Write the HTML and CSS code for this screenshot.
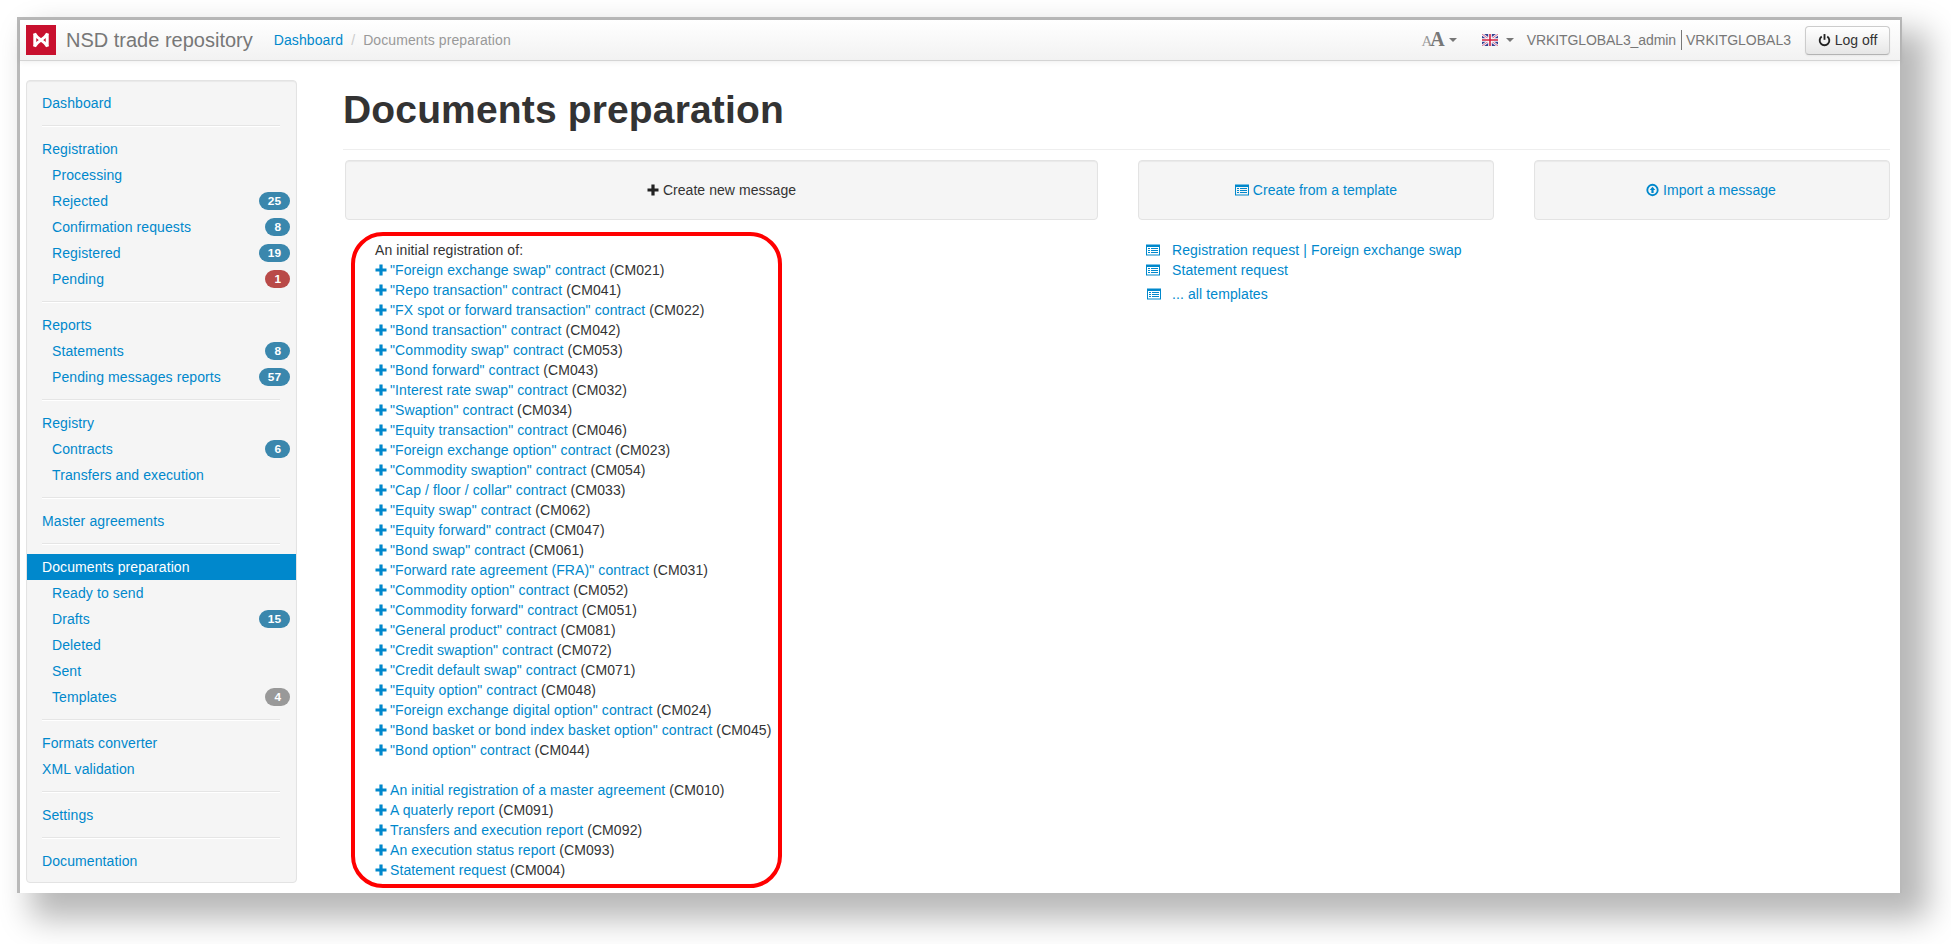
FILE: index.html
```html
<!DOCTYPE html>
<html lang="en">
<head>
<meta charset="utf-8">
<title>Documents preparation</title>
<link rel="stylesheet" href="styles.css">
</head>
<body>
<svg class="sprites" width="0" height="0" aria-hidden="true">
  <symbol id="plus" viewBox="0 0 12 12"><path d="M4.4 0.5h3.2v3.9h3.9v3.2H7.6v3.9H4.4V7.6H.5V4.4h3.9z" fill="currentColor"/></symbol>
  <symbol id="list" viewBox="0 0 14 12"><path fill-rule="evenodd" d="M0 0.5h14v11H0zM1 3v7.5h12V3z" fill="currentColor"/><path d="M2 4h2v1H2zM5 4h7v1H5zM2 6h2v1H2zM5 6h7v1H5zM2 8h2v1H2zM5 8h7v1H5z" fill="currentColor"/></symbol>
</svg>
<div class="frame">
  <header class="topbar">
    <div class="logo">
      <svg viewBox="0 0 30 30" width="30" height="30"><path d="M8.8 8.5v13M21.2 8.5v13" fill="none" stroke="#fff" stroke-width="3"/><path d="M8.5 8.5C12 15 18 15 21.5 21.5M21.5 8.5C18 15 12 15 8.5 21.5" fill="none" stroke="#fff" stroke-width="2.8"/></svg>
    </div>
    <a class="brand">NSD trade repository</a>
    <nav class="crumbs"><a>Dashboard</a><span class="sep">/</span><span class="current">Documents preparation</span></nav>
    <div class="tools">
      <span class="fontsize"><span class="a-small">A</span><span class="a-big">A</span><i class="caret"></i></span>
      <span class="lang">
        <svg viewBox="0 0 16 12" width="16" height="12"><rect width="16" height="12" fill="#34408f"/><path d="M0 0l16 12M16 0L0 12" stroke="#eef" stroke-width="2.6"/><path d="M0 0l16 12M16 0L0 12" stroke="#d8506a" stroke-width=".8"/><path d="M8 0v12M0 6h16" stroke="#fff" stroke-width="3.6"/><path d="M8 0v12M0 6h16" stroke="#d02040" stroke-width="1.6"/></svg>
        <i class="caret"></i>
      </span>
      <span class="user"><span class="user-name">VRKITGLOBAL3_admin</span><span class="user-org">VRKITGLOBAL3</span></span>
      <button class="logoff" type="button">
        <svg viewBox="0 0 14 14" width="13" height="14"><path d="M4 3.2a5.2 5.2 0 1 0 6 0" fill="none" stroke="#222" stroke-width="2"/><path d="M7 .6v6.2" stroke="#222" stroke-width="2"/></svg>
        Log off
      </button>
    </div>
  </header>
  <div class="body">
    <aside class="sidebar">
      <ul class="nav">
        <li><a>Dashboard</a></li>
        <li class="divider"></li>
        <li><a>Registration</a></li>
        <li class="sub"><a>Processing</a></li>
        <li class="sub"><a>Rejected</a><span class="badge">25</span></li>
        <li class="sub"><a>Confirmation requests</a><span class="badge">8</span></li>
        <li class="sub"><a>Registered</a><span class="badge">19</span></li>
        <li class="sub"><a>Pending</a><span class="badge badge-red">1</span></li>
        <li class="divider"></li>
        <li><a>Reports</a></li>
        <li class="sub"><a>Statements</a><span class="badge">8</span></li>
        <li class="sub"><a>Pending messages reports</a><span class="badge">57</span></li>
        <li class="divider"></li>
        <li><a>Registry</a></li>
        <li class="sub"><a>Contracts</a><span class="badge">6</span></li>
        <li class="sub"><a>Transfers and execution</a></li>
        <li class="divider"></li>
        <li><a>Master agreements</a></li>
        <li class="divider"></li>
        <li class="active"><a>Documents preparation</a></li>
        <li class="sub"><a>Ready to send</a></li>
        <li class="sub"><a>Drafts</a><span class="badge">15</span></li>
        <li class="sub"><a>Deleted</a></li>
        <li class="sub"><a>Sent</a></li>
        <li class="sub"><a>Templates</a><span class="badge badge-gray">4</span></li>
        <li class="divider"></li>
        <li><a>Formats converter</a></li>
        <li><a>XML validation</a></li>
        <li class="divider"></li>
        <li><a>Settings</a></li>
        <li class="divider"></li>
        <li><a>Documentation</a></li>
      </ul>
    </aside>
    <main class="content">
      <h1 class="page-title">Documents preparation</h1>
      <div class="columns">
        <div class="panel panel-dark"><svg class="ico-plus"><use href="#plus"/></svg> Create new message</div>
        <a class="panel"><svg class="ico-list"><use href="#list"/></svg> Create from a template</a>
        <a class="panel panel-import">
          <svg viewBox="0 0 14 14" width="13" height="14"><circle cx="7" cy="7" r="5.6" fill="none" stroke="currentColor" stroke-width="2"/><path d="M7 3.6L10 7H8.2v3.2H5.8V7H4z" fill="currentColor"/></svg>
          Import a message</a>
        <div class="msg-list">
          <div>An initial registration of:</div>
          <div><svg class="ico-plus"><use href="#plus"/></svg><a>"Foreign exchange swap" contract</a> (CM021)</div>
          <div><svg class="ico-plus"><use href="#plus"/></svg><a>"Repo transaction" contract</a> (CM041)</div>
          <div><svg class="ico-plus"><use href="#plus"/></svg><a>"FX spot or forward transaction" contract</a> (CM022)</div>
          <div><svg class="ico-plus"><use href="#plus"/></svg><a>"Bond transaction" contract</a> (CM042)</div>
          <div><svg class="ico-plus"><use href="#plus"/></svg><a>"Commodity swap" contract</a> (CM053)</div>
          <div><svg class="ico-plus"><use href="#plus"/></svg><a>"Bond forward" contract</a> (CM043)</div>
          <div><svg class="ico-plus"><use href="#plus"/></svg><a>"Interest rate swap" contract</a> (CM032)</div>
          <div><svg class="ico-plus"><use href="#plus"/></svg><a>"Swaption" contract</a> (CM034)</div>
          <div><svg class="ico-plus"><use href="#plus"/></svg><a>"Equity transaction" contract</a> (CM046)</div>
          <div><svg class="ico-plus"><use href="#plus"/></svg><a>"Foreign exchange option" contract</a> (CM023)</div>
          <div><svg class="ico-plus"><use href="#plus"/></svg><a>"Commodity swaption" contract</a> (CM054)</div>
          <div><svg class="ico-plus"><use href="#plus"/></svg><a>"Cap / floor / collar" contract</a> (CM033)</div>
          <div><svg class="ico-plus"><use href="#plus"/></svg><a>"Equity swap" contract</a> (CM062)</div>
          <div><svg class="ico-plus"><use href="#plus"/></svg><a>"Equity forward" contract</a> (CM047)</div>
          <div><svg class="ico-plus"><use href="#plus"/></svg><a>"Bond swap" contract</a> (CM061)</div>
          <div><svg class="ico-plus"><use href="#plus"/></svg><a>"Forward rate agreement (FRA)" contract</a> (CM031)</div>
          <div><svg class="ico-plus"><use href="#plus"/></svg><a>"Commodity option" contract</a> (CM052)</div>
          <div><svg class="ico-plus"><use href="#plus"/></svg><a>"Commodity forward" contract</a> (CM051)</div>
          <div><svg class="ico-plus"><use href="#plus"/></svg><a>"General product" contract</a> (CM081)</div>
          <div><svg class="ico-plus"><use href="#plus"/></svg><a>"Credit swaption" contract</a> (CM072)</div>
          <div><svg class="ico-plus"><use href="#plus"/></svg><a>"Credit default swap" contract</a> (CM071)</div>
          <div><svg class="ico-plus"><use href="#plus"/></svg><a>"Equity option" contract</a> (CM048)</div>
          <div><svg class="ico-plus"><use href="#plus"/></svg><a>"Foreign exchange digital option" contract</a> (CM024)</div>
          <div><svg class="ico-plus"><use href="#plus"/></svg><a>"Bond basket or bond index basket option" contract</a> (CM045)</div>
          <div class="group-end"><svg class="ico-plus"><use href="#plus"/></svg><a>"Bond option" contract</a> (CM044)</div>
          <div><svg class="ico-plus"><use href="#plus"/></svg><a>An initial registration of a master agreement</a> (CM010)</div>
          <div><svg class="ico-plus"><use href="#plus"/></svg><a>A quaterly report</a> (CM091)</div>
          <div><svg class="ico-plus"><use href="#plus"/></svg><a>Transfers and execution report</a> (CM092)</div>
          <div><svg class="ico-plus"><use href="#plus"/></svg><a>An execution status report</a> (CM093)</div>
          <div><svg class="ico-plus"><use href="#plus"/></svg><a>Statement request</a> (CM004)</div>
        </div>
        <div class="tpl-list">
          <a class="tpl"><svg class="ico-list"><use href="#list"/></svg>Registration request | Foreign exchange swap</a>
          <a class="tpl"><svg class="ico-list"><use href="#list"/></svg>Statement request</a>
          <a class="tpl tpl-all"><svg class="ico-list"><use href="#list"/></svg>... all templates</a>
        </div>
      </div>
    </main>
  </div>
</div>
</body>
</html>
```
FILE: styles.css
```css
* { box-sizing: border-box; }
html, body { margin: 0; padding: 0; height: 100%; overflow: hidden; background: #fff; }
body { font-family: "Liberation Sans", Arial, sans-serif; font-size: 14px; line-height: 20px; color: #333; }
a { color: #08c; text-decoration: none; }
.sprites { position: absolute; }

.frame {
  width: 1885px;
  height: 876px;
  margin: 17px 0 0 17px;
  background: #fff;
  border-style: solid;
  border-color: #b9b9b9;
  border-width: 3px 2px 0 3px;
  box-shadow: 20px 20px 30px 6px #b8b8b8;
}

.topbar {
  height: 41px;
  display: flex;
  align-items: center;
  padding: 0 10px 0 6px;
  background: linear-gradient(#fff, #f2f2f2);
  border-bottom: 1px solid #d4d4d4;
  box-shadow: 0 1px 6px rgba(0,0,0,.07);
}
.logo { width: 30px; height: 30px; background: #c8102e; flex: none; }
.logo svg { display: block; }
.brand { margin-left: 10px; font-size: 20px; color: #777; }
.crumbs { margin-left: 21px; letter-spacing: .1px; }
.crumbs .sep { color: #ccc; padding: 0 8px; }
.crumbs .current { color: #999; }

.tools { margin-left: auto; display: flex; align-items: center; color: #777; }
.fontsize { display: flex; align-items: baseline; font-family: "Liberation Serif", serif; color: #777; }
.a-small { font-size: 15px; margin-right: -2px; color: #999; }
.a-big { font-size: 20px; font-weight: bold; color: #777; }
.caret { display: inline-block; width: 0; height: 0; border: 4px solid transparent; border-top-color: #777; border-bottom-width: 0; vertical-align: middle; }
.fontsize .caret { margin-left: 4px; align-self: center; }
.lang { display: flex; align-items: center; margin-left: 25px; }
.lang .caret { margin-left: 8px; }
.user { margin-left: 13px; display: flex; align-items: center; }
.user-name { padding-right: 5px; border-right: 1px solid #777; letter-spacing: -.1px; }
.user-org { padding-left: 4px; }
.logoff {
  margin-left: 14px;
  width: 85px;
  height: 29px;
  padding: 0;
  display: flex;
  align-items: center;
  justify-content: center;
  gap: 4px;
  font: 14px/20px "Liberation Sans", Arial, sans-serif;
  color: #333;
  background: linear-gradient(#fff, #e6e6e6);
  border: 1px solid #ccc;
  border-bottom-color: #b3b3b3;
  border-radius: 4px;
  box-shadow: inset 0 1px 0 rgba(255,255,255,.2), 0 1px 2px rgba(0,0,0,.05);
}

.body { display: flex; align-items: flex-start; padding-left: 6px; }
.sidebar {
  width: 271px;
  height: 803px;
  margin-top: 19px;
  flex: none;
  padding: 9px 0 8px;
  background: #f5f5f5;
  border: 1px solid #e3e3e3;
  border-radius: 4px;
  box-shadow: inset 0 1px 1px rgba(0,0,0,.05);
}
.nav { list-style: none; margin: 0; padding: 0; }
.nav li { display: flex; align-items: center; justify-content: space-between; height: 26px; padding: 0 6px 0 15px; }
.nav li a { letter-spacing: .1px; }
.nav li.sub { padding-left: 25px; }
.nav li.divider { display: block; height: 2px; margin: 9px 16px 9px 15px; padding: 0; background: #e5e5e5; border-bottom: 1px solid #fff; }
.nav li.active { background: #08c; }
.nav li.active a { color: #fff; }
.badge { height: 18px; padding: 0 9px; border-radius: 9px; background: #3a87ad; color: #fff; font-size: 11.844px; font-weight: bold; line-height: 18px; }
.badge-red { background: #b94a48; }
.badge-gray { background: #999; }

.content { flex: 1; min-width: 0; margin-left: 46px; padding-right: 10px; }
.page-title { margin: 0; height: 89px; padding-top: 29px; font-size: 39px; letter-spacing: .15px; line-height: 40px; font-weight: bold; color: #333; border-bottom: 1px solid #eee; }
.columns { display: grid; grid-template-columns: 753px 356px 1fr; column-gap: 40px; margin: 10px 0 0 2px; align-items: start; }
.panel { height: 60px; display: flex; align-items: center; justify-content: center; gap: 4px; letter-spacing: .05px; background: #f5f5f5; border: 1px solid #e3e3e3; border-radius: 4px; box-shadow: inset 0 1px 1px rgba(0,0,0,.05); }
.panel-import { padding-right: 2px; }
.panel-dark { color: #333; }
.ico-plus { width: 12px; height: 12px; color: #08c; margin-right: 3px; vertical-align: -1px; }
.panel .ico-plus { color: #222; margin-right: 0; }
.ico-list { width: 14px; height: 12px; color: #08c; }

.msg-list { width: 431px; height: 656px; margin: 12px 0 0 6px; padding: 4px 0 4px 20px; border: 4px solid #f00; border-radius: 32px; white-space: nowrap; letter-spacing: .1px; }
.group-end { margin-bottom: 20px; }

.tpl-list { margin-top: 20px; padding-left: 8px; letter-spacing: .1px; }
.tpl { display: flex; align-items: center; gap: 12px; height: 20px; }
.tpl-all { margin-top: 4px; margin-left: 1px; gap: 11px; }
```
